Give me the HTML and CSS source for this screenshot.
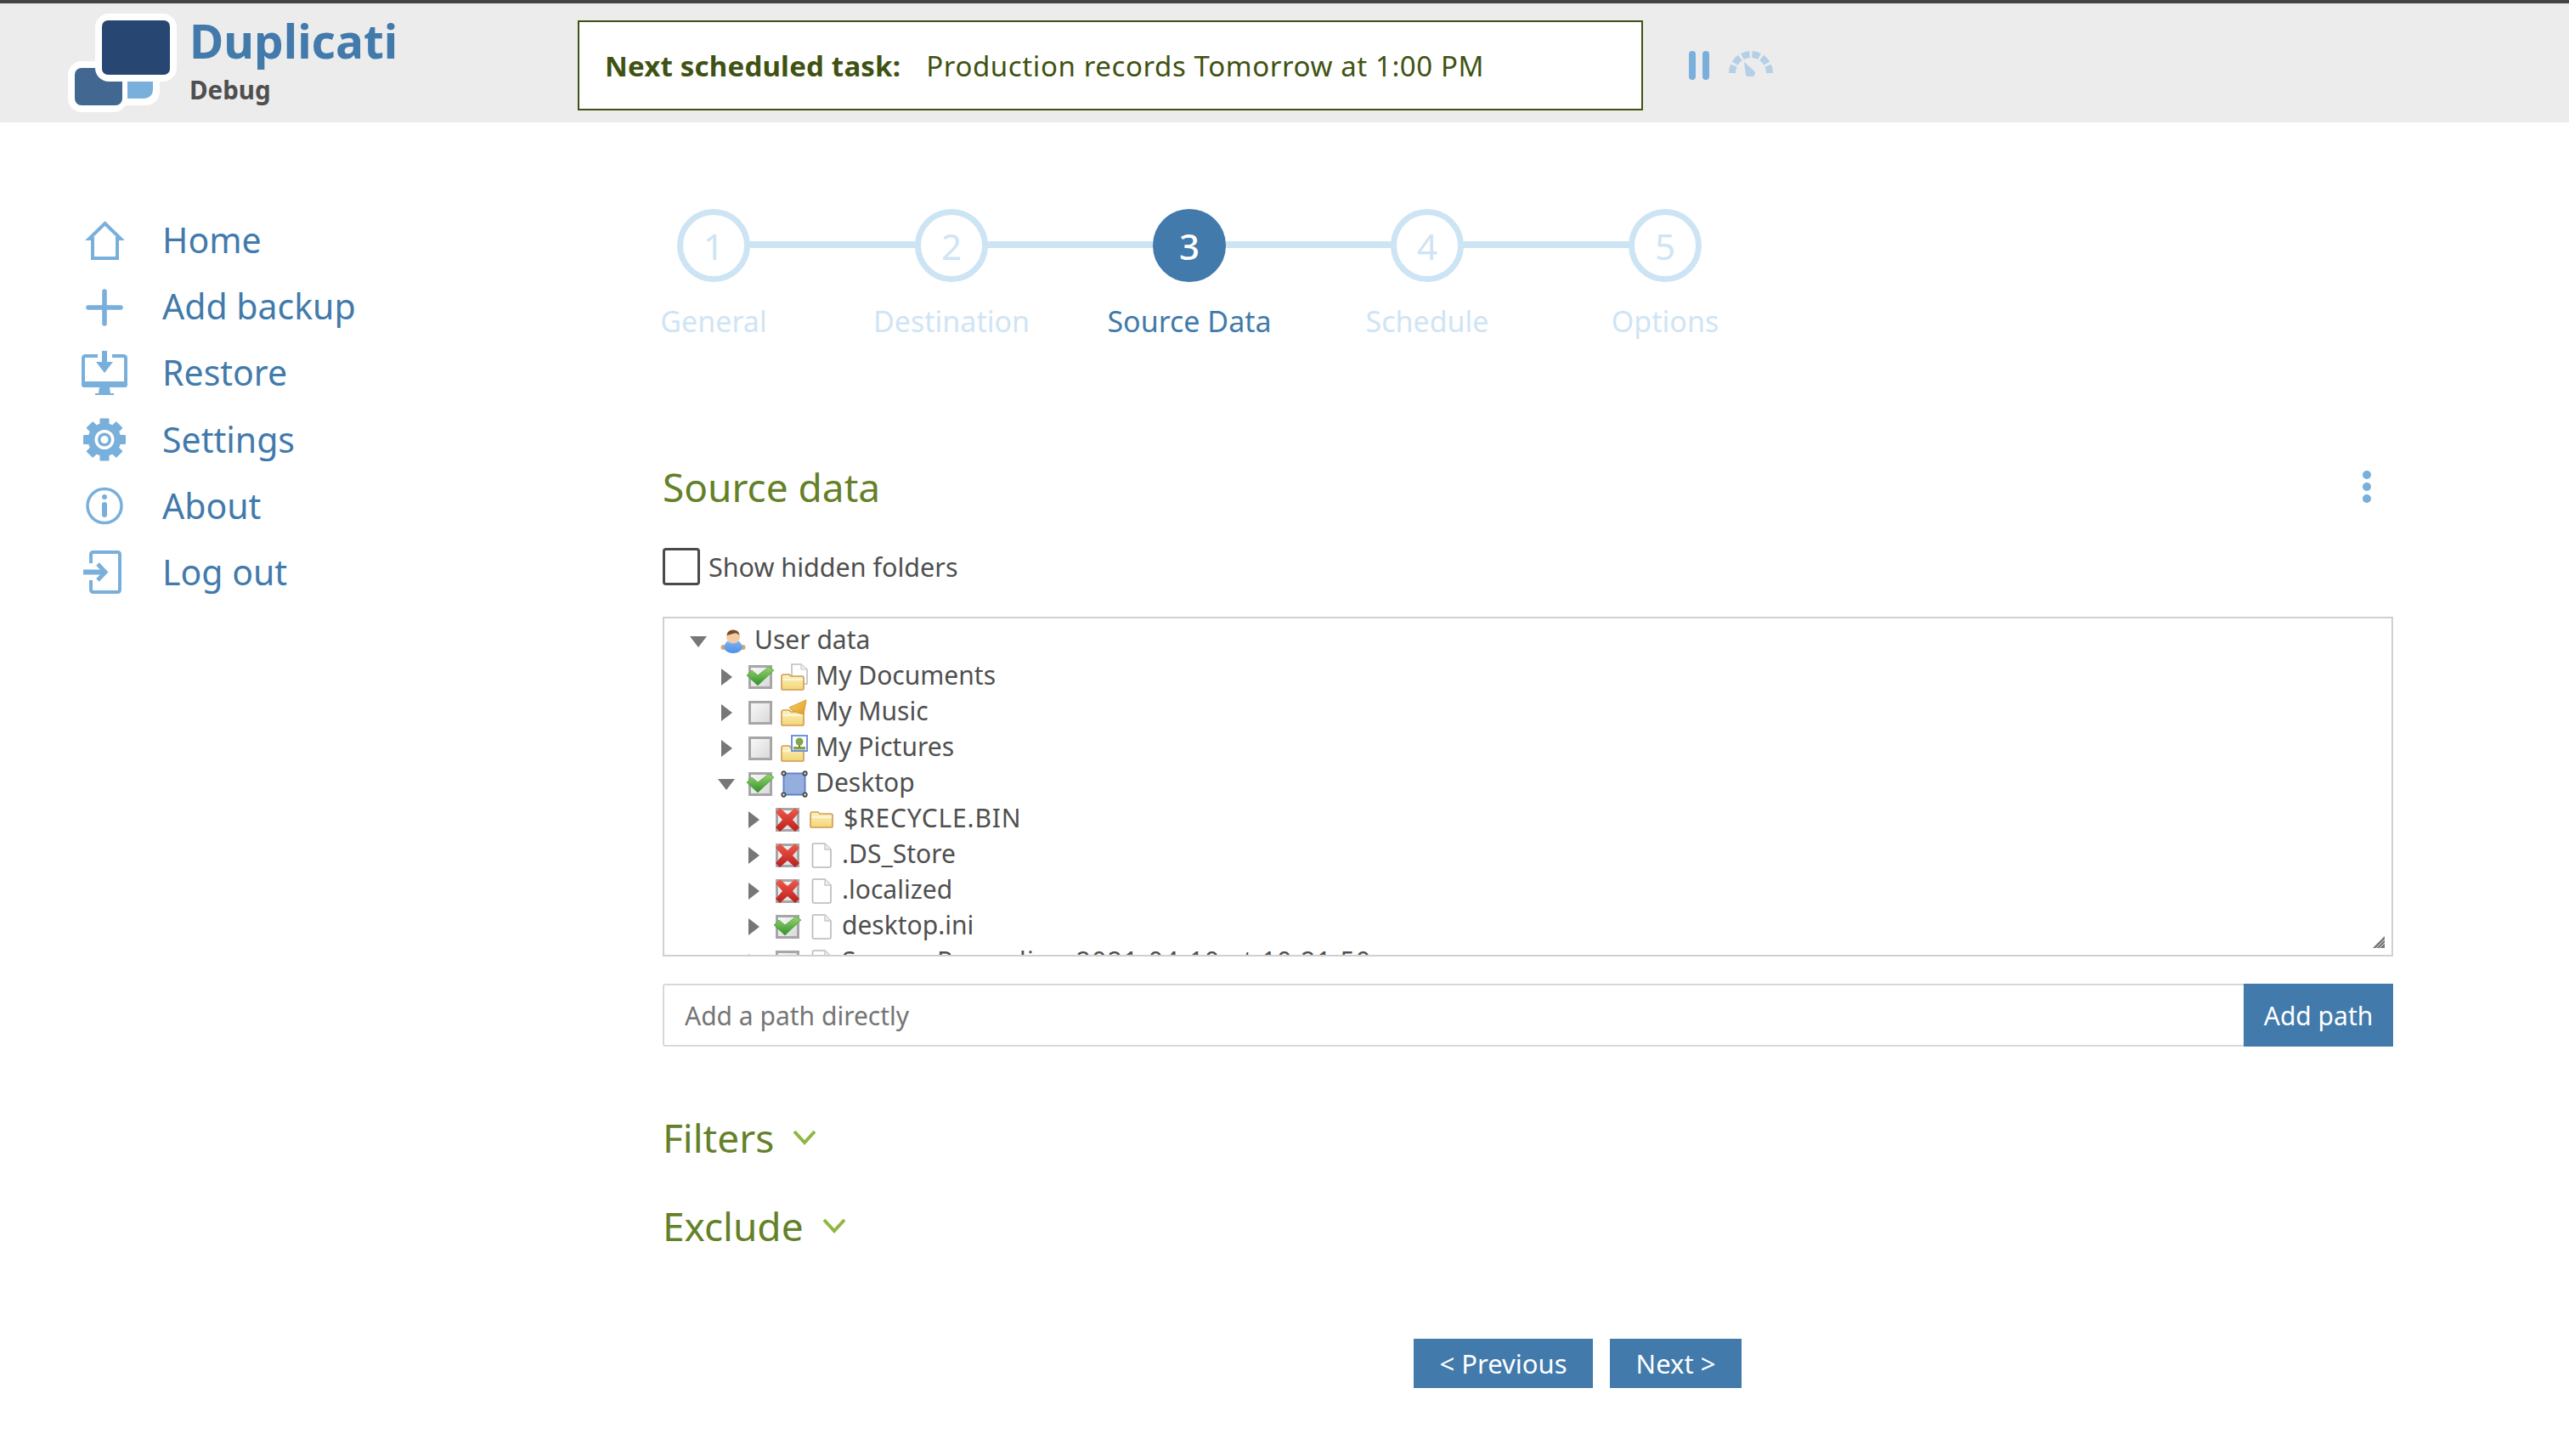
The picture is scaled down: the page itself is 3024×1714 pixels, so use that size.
FILE: index.html
```html
<!DOCTYPE html>
<html lang="en">
<head>
  <meta charset="UTF-8">
  <meta name="viewport" content="width=device-width, initial-scale=1.0">
  <title>Duplicati - Source Data</title>
  <link rel="stylesheet" href="styles.css">
</head>
<body>

  <!-- shared tree icons -->
  <svg class="defs" width="0" height="0" aria-hidden="true">
    <defs>
      <linearGradient id="gFolder" x1="0" y1="0" x2="0" y2="1">
        <stop offset="0" stop-color="#fdf3c4"/>
        <stop offset="1" stop-color="#f2d572"/>
      </linearGradient>
      <linearGradient id="gBox" x1="0" y1="0" x2="1" y2="1">
        <stop offset="0" stop-color="#fafafa"/>
        <stop offset="1" stop-color="#d8d8d8"/>
      </linearGradient>
      <linearGradient id="gTick" x1="0" y1="0" x2="0" y2="1">
        <stop offset="0" stop-color="#9ad56f"/>
        <stop offset="1" stop-color="#2f9128"/>
      </linearGradient>
      <linearGradient id="gCross" x1="0" y1="0" x2="0" y2="1">
        <stop offset="0" stop-color="#ef5a4e"/>
        <stop offset="1" stop-color="#b91f1a"/>
      </linearGradient>
      <linearGradient id="gShirt" x1="0" y1="0" x2="0" y2="1">
        <stop offset="0" stop-color="#82b6f2"/>
        <stop offset="1" stop-color="#4c8fe6"/>
      </linearGradient>
      <linearGradient id="gNote" x1="0" y1="0" x2="1" y2="1">
        <stop offset="0" stop-color="#f8d66a"/>
        <stop offset="1" stop-color="#dd9a22"/>
      </linearGradient>

      <symbol id="folder" viewBox="0 0 28 20">
        <path d="M1 4 Q1 1 3 1 H10 L12 3 H25 Q27 3 27 5 V18 Q27 19 26 19 H2 Q1 19 1 18 Z" fill="url(#gFolder)" stroke="#cf9a52" stroke-width="1.6"/>
        <path d="M2 7 H26" stroke="#fff" stroke-width="1.4" opacity=".8"/>
      </symbol>
      <symbol id="file" viewBox="0 0 24 30">
        <path d="M1.5 2.5 Q1.5 1 3 1 H16 L23 8 V27 Q23 29 21 29 H3 Q1.5 29 1.5 27 Z" fill="#fff" stroke="#b8b8b8" stroke-width="1.6"/>
        <path d="M16 1 V8 H23" fill="#eee" stroke="#c8c8c8" stroke-width="1.4"/>
      </symbol>
      <symbol id="docs" viewBox="0 0 32 32">
        <path d="M13 1 H24 L31 7 V24 H13 Z" fill="#fff" stroke="#bdbdbd" stroke-width="1.6"/>
        <path d="M24 1 V7 H31" fill="#eee" stroke="#c8c8c8" stroke-width="1.2"/>
        <use href="#folder" x="0" y="12" width="28" height="20"/>
      </symbol>
      <symbol id="music" viewBox="0 0 32 32">
        <use href="#folder" x="0" y="12" width="28" height="20"/>
        <path d="M10 10 L30 1 L27 18 L20 16 Q13 14 10 10 Z" fill="url(#gNote)" stroke="#d89a2c" stroke-width="1"/>
      </symbol>
      <symbol id="pics" viewBox="0 0 32 32">
        <use href="#folder" x="0" y="12" width="28" height="20"/>
        <rect x="13" y="1" width="18" height="18" fill="#fff" stroke="#6f93dc" stroke-width="2"/>
        <rect x="15" y="14" width="14" height="3.5" fill="#86a34c"/>
        <rect x="21" y="11" width="2" height="4" fill="#8a6a3c"/>
        <circle cx="22" cy="8" r="4.5" fill="#7aa84a"/>
      </symbol>
      <symbol id="desk" viewBox="0 0 28 28">
        <rect x="3" y="3" width="22" height="22" fill="#94aede" stroke="#5d80cf" stroke-width="1.6"/>
        <g fill="#c9c9c9" stroke="#444" stroke-width="1.4">
          <circle cx="3" cy="3" r="2"/>
          <circle cx="25" cy="3" r="2"/>
          <circle cx="3" cy="25" r="2"/>
          <circle cx="25" cy="25" r="2"/>
        </g>
      </symbol>
      <symbol id="person" viewBox="0 0 30 28">
        <circle cx="3.5" cy="21" r="3" fill="#d2a679"/>
        <circle cx="26.5" cy="21" r="3" fill="#d2a679"/>
        <path d="M4 21 Q6 12 15 12 Q24 12 26 21 Q24 28 15 28 Q6 28 4 21 Z" fill="url(#gShirt)"/>
        <circle cx="15" cy="8.5" r="8" fill="#f0cda6"/>
        <path d="M7.5 7 Q8 .5 15 .5 Q22 .5 22.5 7 Q19 3 15 5 Q11 6 7.5 7 Z" fill="#7b4a22"/>
      </symbol>
      <symbol id="box" viewBox="0 0 28 28">
        <rect x="1.5" y="1.5" width="25" height="25" fill="url(#gBox)" stroke="#a6a6a6" stroke-width="3"/>
      </symbol>
      <symbol id="tick" viewBox="0 0 32 22">
        <path d="M0 10 L6 4 L13 10 L26 0 L32 4 L13 22 Z" fill="url(#gTick)" stroke="#3b9530" stroke-width=".6"/>
      </symbol>
      <symbol id="cross" viewBox="0 0 28 28">
        <path d="M0 5 L5 0 L14 8 L23 0 L28 5 L20 14 L28 23 L23 28 L14 20 L5 28 L0 23 L8 14 Z" fill="url(#gCross)"/>
      </symbol>
    </defs>
  </svg>

  <header class="topbar">
    <svg class="logo" width="136" height="116" viewBox="0 0 136 116">
      <rect x="32" y="28" width="76" height="80" rx="16" fill="#fff"/>
      <rect x="40" y="36" width="60" height="64" rx="10" fill="#79afdb"/>
      <rect x="0" y="56" width="70" height="60" rx="16" fill="#fff"/>
      <rect x="8" y="64" width="56" height="44" rx="8" fill="#426791"/>
      <rect x="32" y="0" width="96" height="80" rx="16" fill="#fff"/>
      <rect x="40" y="8" width="80" height="64" rx="7" fill="#284672"/>
    </svg>
    <div class="brand">
      <div class="brand-name">Duplicati</div>
      <div class="brand-sub">Debug</div>
    </div>
    <div class="schedule">
      <strong>Next scheduled task:</strong>
      <span>Production records Tomorrow at 1:00 PM</span>
    </div>
    <div class="pause"><i></i><i></i></div>
    <svg class="gauge" width="54" height="30" viewBox="0 0 54 30">
      <path d="M5 26 A22 22 0 0 1 49 26" pathLength="100" fill="none" stroke="#b3d0e7" stroke-width="8" stroke-dasharray="13 4.4"/>
      <path d="M19 13 L31.5 24 A5.5 5.5 0 1 1 21 28 Z" fill="#b3d0e7"/>
    </svg>
  </header>

  <div class="layout">
    <nav class="sidebar">
      <a class="nav-item">
        <svg viewBox="0 0 56 56"><path d="M28.5 8 L47 26 H43 V49 H14 V26 H10 Z" fill="none" stroke="#79afdb" stroke-width="4"/></svg>
        <span class="nav-text">Home</span>
      </a>
      <a class="nav-item">
        <svg viewBox="0 0 56 56"><path d="M28 10 V48 M9 29 H47" fill="none" stroke="#79afdb" stroke-width="5.5" stroke-linecap="round"/></svg>
        <span class="nav-text">Add backup</span>
      </a>
      <a class="nav-item">
        <svg viewBox="0 0 56 56">
          <path d="M20 8 H6 Q3 8 3 11 V38 Q3 43 6 43 H50 Q53 43 53 38 V11 Q53 8 50 8 H37" fill="none" stroke="#79afdb" stroke-width="4"/>
          <rect x="1" y="38" width="54" height="7" rx="3" fill="#79afdb"/>
          <path d="M22 45 H34 L35 52 H39 V54 H17 V52 H21 Z" fill="#79afdb"/>
          <rect x="25" y="2" width="6" height="18" fill="#79afdb"/>
          <path d="M18 15 H38 L28 28 Z" fill="#79afdb"/>
        </svg>
        <span class="nav-text">Restore</span>
      </a>
      <a class="nav-item">
        <svg viewBox="0 0 56 56">
          <g fill="#79afdb">
            <rect x="22.5" y="2.5" width="11" height="10" rx="1"/>
            <rect x="22.5" y="2.5" width="11" height="10" rx="1" transform="rotate(45 28 27.5)"/>
            <rect x="22.5" y="2.5" width="11" height="10" rx="1" transform="rotate(90 28 27.5)"/>
            <rect x="22.5" y="2.5" width="11" height="10" rx="1" transform="rotate(135 28 27.5)"/>
            <rect x="22.5" y="2.5" width="11" height="10" rx="1" transform="rotate(180 28 27.5)"/>
            <rect x="22.5" y="2.5" width="11" height="10" rx="1" transform="rotate(225 28 27.5)"/>
            <rect x="22.5" y="2.5" width="11" height="10" rx="1" transform="rotate(270 28 27.5)"/>
            <rect x="22.5" y="2.5" width="11" height="10" rx="1" transform="rotate(315 28 27.5)"/>
            <circle cx="28" cy="27.5" r="19.5"/>
          </g>
          <circle cx="28" cy="27.5" r="11.5" fill="#fff"/>
          <circle cx="28" cy="27.5" r="8" fill="#79afdb"/>
          <circle cx="28" cy="27.5" r="4.5" fill="#fff"/>
        </svg>
        <span class="nav-text">Settings</span>
      </a>
      <a class="nav-item">
        <svg viewBox="0 0 56 56">
          <circle cx="28" cy="27.5" r="20" fill="none" stroke="#79afdb" stroke-width="3.5"/>
          <circle cx="28" cy="17" r="3" fill="#79afdb"/>
          <path d="M28 26 V38" stroke="#79afdb" stroke-width="6" stroke-linecap="round"/>
        </svg>
        <span class="nav-text">About</span>
      </a>
      <a class="nav-item">
        <svg viewBox="0 0 56 56">
          <path d="M12 17 V7 Q12 4 15 4 H43 Q46 4 46 7 V48 Q46 51 43 51 H15 Q12 51 12 48 V37" fill="none" stroke="#79afdb" stroke-width="4"/>
          <path d="M3 27.5 H26" stroke="#79afdb" stroke-width="6"/>
          <path d="M20 18 L29 27.5 L20 37" fill="none" stroke="#79afdb" stroke-width="5"/>
        </svg>
        <span class="nav-text">Log out</span>
      </a>
    </nav>

    <main class="content">
      <ol class="steps">
        <li class="step"><span class="step-num">1</span><span class="step-label">General</span></li>
        <li class="step"><span class="step-num">2</span><span class="step-label">Destination</span></li>
        <li class="step active"><span class="step-num">3</span><span class="step-label">Source Data</span></li>
        <li class="step"><span class="step-num">4</span><span class="step-label">Schedule</span></li>
        <li class="step"><span class="step-num">5</span><span class="step-label">Options</span></li>
      </ol>

      <div class="section-head">
        <h2>Source data</h2>
        <div class="dots"><i></i><i></i><i></i></div>
      </div>

      <label class="show-hidden"><span class="checkbox"></span>Show hidden folders</label>

      <div class="tree">
        <div class="row lvl0">
          <span class="tog open"></span>
          <svg class="ic person"><use href="#person"/></svg>
          <span class="name">User data</span>
        </div>
        <div class="row lvl1">
          <span class="tog"></span>
          <span class="chk"><svg class="cb"><use href="#box"/></svg><svg class="mark-tick"><use href="#tick"/></svg></span>
          <svg class="ic fancy"><use href="#docs"/></svg>
          <span class="name">My Documents</span>
        </div>
        <div class="row lvl1">
          <span class="tog"></span>
          <span class="chk"><svg class="cb"><use href="#box"/></svg></span>
          <svg class="ic fancy"><use href="#music"/></svg>
          <span class="name">My Music</span>
        </div>
        <div class="row lvl1">
          <span class="tog"></span>
          <span class="chk"><svg class="cb"><use href="#box"/></svg></span>
          <svg class="ic fancy"><use href="#pics"/></svg>
          <span class="name">My Pictures</span>
        </div>
        <div class="row lvl1">
          <span class="tog open"></span>
          <span class="chk"><svg class="cb"><use href="#box"/></svg><svg class="mark-tick"><use href="#tick"/></svg></span>
          <svg class="ic fancy"><use href="#desk"/></svg>
          <span class="name">Desktop</span>
        </div>
        <div class="row lvl2">
          <span class="tog"></span>
          <span class="chk"><svg class="cb"><use href="#box"/></svg><svg class="mark-cross"><use href="#cross"/></svg></span>
          <svg class="ic plain-folder"><use href="#folder"/></svg>
          <span class="name caps-name">$RECYCLE.BIN</span>
        </div>
        <div class="row lvl2">
          <span class="tog"></span>
          <span class="chk"><svg class="cb"><use href="#box"/></svg><svg class="mark-cross"><use href="#cross"/></svg></span>
          <svg class="ic doc"><use href="#file"/></svg>
          <span class="name">.DS_Store</span>
        </div>
        <div class="row lvl2">
          <span class="tog"></span>
          <span class="chk"><svg class="cb"><use href="#box"/></svg><svg class="mark-cross"><use href="#cross"/></svg></span>
          <svg class="ic doc"><use href="#file"/></svg>
          <span class="name">.localized</span>
        </div>
        <div class="row lvl2">
          <span class="tog"></span>
          <span class="chk"><svg class="cb"><use href="#box"/></svg><svg class="mark-tick"><use href="#tick"/></svg></span>
          <svg class="ic doc"><use href="#file"/></svg>
          <span class="name">desktop.ini</span>
        </div>
        <div class="row lvl2">
          <span class="tog"></span>
          <span class="chk"><svg class="cb"><use href="#box"/></svg></span>
          <svg class="ic doc"><use href="#file"/></svg>
          <span class="name wide-name">Screen Recording 2021-04-10 at 10.21.50</span>
        </div>
        <svg class="grip" width="16" height="16" viewBox="0 0 16 16">
          <path d="M1 15 L15 1 V15 Z" fill="#777"/>
          <path d="M5 15 L15 5 M9 15 L15 9" stroke="#fff" stroke-width=".8"/>
        </svg>
      </div>

      <div class="add-path">
        <input class="path-input" type="text" placeholder="Add a path directly">
        <button class="btn add-btn">Add path</button>
      </div>

      <div class="collapse first">
        <h3>Filters</h3>
        <svg width="28" height="18" viewBox="0 0 28 18"><path d="M2 2 L14 15 L26 2" fill="none" stroke="#8fb744" stroke-width="4"/></svg>
      </div>
      <div class="collapse">
        <h3>Exclude</h3>
        <svg width="28" height="18" viewBox="0 0 28 18"><path d="M2 2 L14 15 L26 2" fill="none" stroke="#8fb744" stroke-width="4"/></svg>
      </div>

      <div class="wizard-nav">
        <button class="btn nav-btn">&lt; Previous</button>
        <button class="btn nav-btn">Next &gt;</button>
      </div>
    </main>
  </div>
</body>
</html>
```
FILE: styles.css
```css
* {
  margin: 0;
  padding: 0;
  box-sizing: border-box;
}

html, body {
  height: 100%;
  overflow: hidden;
  background: #fff;
  font-family: "Noto Sans", "Open Sans", sans-serif;
}

.defs {
  position: absolute;
}

/* Top bar */
.topbar {
  height: 144px;
  display: flex;
  align-items: flex-start;
  background: #ececec;
  border-top: 4px solid #444;
}

.logo {
  margin: 12px 0 0 80px;
  flex: none;
}

.brand {
  width: 457px;
  margin-left: 7px;
  flex: none;
}

.brand-name {
  margin-top: 9px;
  font-size: 55px;
  line-height: 70px;
  font-weight: 700;
  color: #417aab;
}

.brand-sub {
  margin-top: 5px;
  font-size: 29.5px;
  line-height: 36px;
  font-weight: 700;
  color: #4f4f4f;
}

.schedule {
  width: 1254px;
  height: 106px;
  margin-top: 20px;
  padding-left: 30px;
  display: flex;
  align-items: center;
  gap: 30px;
  background: #fff;
  border: 2px solid #3f5213;
  font-size: 33px;
  color: #3f5213;
}

.schedule strong {
  letter-spacing: .2px;
}

.schedule span {
  letter-spacing: .6px;
}

.pause {
  display: flex;
  gap: 8px;
  margin: 56px 0 0 54px;
}

.pause i {
  width: 8px;
  height: 34px;
  border-radius: 4px;
  background: #79afdb;
}

.gauge {
  margin: 56px 0 0 22px;
}

/* Sidebar */
.layout {
  display: flex;
}

.sidebar {
  width: 780px;
  flex: none;
  padding: 100px 0 0 95px;
}

.nav-item {
  height: 78.2px;
  display: flex;
  align-items: center;
  gap: 40px;
  font-size: 41px;
  color: #417aab;
}

.nav-item svg {
  width: 56px;
  height: 56px;
  flex: none;
}

.nav-text {
  padding-bottom: 2px;
}

/* Main column */
.content {
  width: 2037px;
  flex: none;
  padding-top: 102px;
}

.steps {
  display: flex;
  list-style: none;
  margin-left: -80px;
}

.step {
  width: 280px;
  display: flex;
  flex-direction: column;
  align-items: center;
  position: relative;
  color: #cfe4f4;
}

.step:not(:last-child)::after {
  content: "";
  position: absolute;
  top: 38px;
  left: 50%;
  width: 280px;
  height: 8px;
  background: #cde4f4;
}

.step-num {
  width: 86px;
  height: 86px;
  display: flex;
  align-items: center;
  justify-content: center;
  position: relative;
  z-index: 1;
  background: #fff;
  border: 7px solid #cde4f4;
  border-radius: 50%;
  font-size: 42px;
}

.step-label {
  margin-top: 22px;
  font-size: 34px;
  line-height: 48px;
}

.step.active {
  color: #417aab;
}

.step.active .step-num {
  background: #417aab;
  border-color: #417aab;
  color: #fff;
  font-weight: 500;
}

.section-head {
  margin-top: 141px;
  height: 60px;
  display: flex;
  align-items: center;
  justify-content: space-between;
  padding-right: 26px;
}

h2, h3 {
  font-weight: 400;
  font-size: 46px;
  color: #648028;
}

.dots {
  display: flex;
  flex-direction: column;
  gap: 4px;
}

.dots i {
  width: 10px;
  height: 10px;
  border-radius: 50%;
  background: #79afdb;
}

.show-hidden {
  margin-top: 42px;
  height: 44px;
  display: flex;
  align-items: center;
  gap: 10px;
  font-size: 30.5px;
  color: #4f4f4f;
}

.checkbox {
  width: 44px;
  height: 44px;
  border: 3px solid #4a4a4a;
  border-radius: 4px;
  background: #fff;
}

/* Tree */
.tree {
  margin-top: 37px;
  height: 400px;
  position: relative;
  overflow: hidden;
  padding-top: 6px;
  border: 2px solid #d0d0d0;
  font-size: 30px;
  color: #4f4f4f;
}

.row {
  height: 42px;
  display: flex;
  align-items: center;
  white-space: nowrap;
}

.name {
  margin-bottom: 6px;
}

.lvl0 { padding-left: 24px; }
.lvl1 { padding-left: 57px; }
.lvl2 { padding-left: 89px; }

.tog {
  width: 32px;
  margin-right: 10px;
  flex: none;
  display: flex;
  justify-content: center;
}

.tog::before {
  content: "";
  border-style: solid;
  border-width: 10px 0 10px 13px;
  border-color: transparent transparent transparent #777;
}

.tog.open::before {
  border-width: 13px 10px 0 10px;
  border-color: #777 transparent transparent transparent;
}

.chk {
  width: 28px;
  height: 28px;
  flex: none;
  position: relative;
  margin-right: 10px;
}

.cb {
  display: block;
  width: 28px;
  height: 28px;
}

.mark-tick {
  position: absolute;
  left: -2px;
  top: 2px;
  width: 32px;
  height: 22px;
}

.mark-cross {
  position: absolute;
  left: 0;
  top: 0;
  width: 28px;
  height: 28px;
}

.ic {
  flex: none;
}

.ic.person {
  width: 30px;
  height: 28px;
  margin-right: 10px;
}

.ic.fancy {
  width: 32px;
  height: 32px;
  margin-right: 9px;
}

.ic.plain-folder {
  width: 28px;
  height: 20px;
  margin: 0 12px 0 2px;
}

.ic.doc {
  width: 24px;
  height: 30px;
  margin: 0 12px 0 4px;
}

.caps-name {
  letter-spacing: .8px;
}

.wide-name {
  letter-spacing: 1.3px;
}

.grip {
  position: absolute;
  right: 7px;
  bottom: 7px;
}

/* Add path */
.add-path {
  margin-top: 32px;
  height: 74px;
  display: flex;
}

.path-input {
  flex: 1;
  min-width: 0;
  padding-left: 24px;
  border: 2px solid #d8d8d8;
  border-right: none;
  border-radius: 3px 0 0 3px;
  font: inherit;
  font-size: 30px;
  color: #4f4f4f;
  outline: none;
}

.path-input::placeholder {
  color: #757575;
  opacity: 1;
}

.btn {
  border: none;
  background: #417aab;
  color: #fff;
  font-family: inherit;
  font-size: 30px;
}

.add-btn {
  width: 176px;
}

/* Collapsible sections */
.collapse {
  height: 60px;
  margin-top: 44px;
  display: flex;
  align-items: center;
  gap: 22px;
}

.collapse.first {
  margin-top: 77px;
}

/* Wizard buttons */
.wizard-nav {
  margin: 103px 0 0 884px;
  display: flex;
  gap: 20px;
}

.nav-btn {
  height: 58px;
  padding: 0 30.5px;
  font-size: 31px;
}
```
